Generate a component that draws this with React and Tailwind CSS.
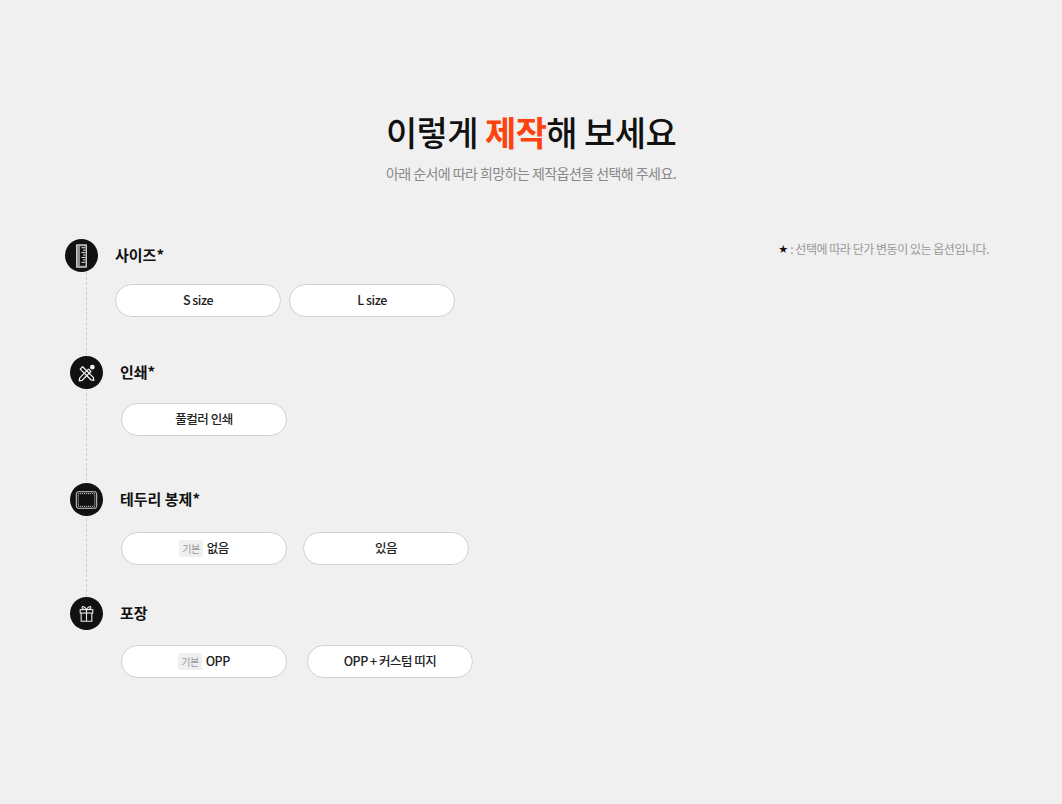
const font = { fontFamily: '"Noto Sans CJK KR", "Noto Sans", sans-serif' };

function RulerIcon() {
  return (
    <svg width="34" height="34" viewBox="0 0 34 34" fill="none">
      <rect x="12" y="5.500" width="10" height="23" fill="#8f8f8f" stroke="#e4e4e4" strokeWidth="1" />
      <rect x="15.500" y="7" width="5.500" height="20" fill="#111" />
      <path d="M17 8.500h4M18.500 11h2.500M17 13.500h4M18.500 16h2.500M17 18.500h4M18.500 21h2.500M17 23.500h4" stroke="#eee" strokeWidth="1" />
    </svg>
  );
}

function ToolsIcon() {
  return (
    <svg width="34" height="34" viewBox="0 0 34 34" fill="none" stroke="#f2f2f2" strokeWidth="1.300" strokeLinejoin="round">
      <path d="M10.500 13l2.500-2.500 11 11 .5 3-3-.5z" />
      <path d="M10 22l9-9 2.500 2.500-9 9-3 .5z" />
      <circle cx="23" cy="11" r="1.800" fill="#f2f2f2" />
    </svg>
  );
}

function StitchIcon() {
  return (
    <svg width="34" height="34" viewBox="0 0 34 34" fill="none">
      <rect x="6.500" y="8.500" width="21" height="17" rx="2" stroke="#d8d8d8" strokeWidth="1" />
      <rect x="8.500" y="10.500" width="17" height="13" stroke="#eee" strokeWidth="1" strokeDasharray="1 1" />
    </svg>
  );
}

function GiftIcon() {
  return (
    <svg width="34" height="34" viewBox="0 0 34 34" fill="none" stroke="#eee" strokeWidth="1.100">
      <rect x="10.500" y="12.500" width="13" height="3.500" />
      <path d="M11.500 16v8.500h11V16M17 12.500v12" />
      <path d="M17 12.500c-1-2.500-4-4-4.500-2.500s1.500 2.500 4.500 2.500c3 0 5-1 4.500-2.500s-3.500 0-4.500 2.500z" />
    </svg>
  );
}

function Step({ icon, title, className, children }) {
  return (
    <section className={className}>
      <div className="flex items-center gap-[17px]">
        <div className="relative z-10 flex h-[33px] w-[33px] shrink-0 items-center justify-center rounded-full bg-[#111111]">
          {icon}
        </div>
        <h3 className="pb-[2px] text-[15px] font-bold leading-[31px] text-[#111111]">{title}</h3>
      </div>
      {children}
    </section>
  );
}

function Option({ base, children }) {
  return (
    <button className="flex h-[33px] w-[166px] shrink-0 items-center justify-center gap-[4px] rounded-full border border-[#d0d0d0] bg-white pb-[1px] text-[12.5px] font-medium tracking-[-0.5px] text-[#222222]">
      {base && (
        <span className="mt-[1px] rounded-[2px] bg-[#f0f0f0] px-[3px] text-[10px] font-normal leading-[17px] text-[#999999]">
          기본
        </span>
      )}
      {children}
    </button>
  );
}

export default function App() {
  return (
    <div className="relative h-[804px] overflow-hidden bg-[#f0f0f0]" style={font}>
      {/* heading */}
      <div className="pt-[108px] text-center">
        <h1 className="text-[34px] font-medium leading-[48px] tracking-[-0.6px] text-[#111111]">
          이렇게 <span className="font-bold text-[#fc4310]">제작</span>해 보세요
        </h1>
        <p className="mt-[6px] text-[14px] leading-[22px] tracking-[-0.55px] text-[#888888]">
          아래 순서에 따라 희망하는 제작옵션을 선택해 주세요.
        </p>
      </div>

      <div className="relative mt-[55px]">
        <p className="absolute right-[73px] top-[0px] flex items-center text-[12px] leading-[20px] tracking-[-0.47px] text-[#999999]">
          <span className="mr-[3px] text-[9px] text-[#111111]">★</span>: 선택에 따라 단가 변동이 있는 옵션입니다.
        </p>

        {/* dashed line joining the steps */}
        <div className="absolute left-[86px] top-[33px] h-[325px] border-l border-dashed border-[#cccccc]" />

        <Step icon={<RulerIcon />} title="사이즈*" className="ml-[65px]">
          <div className="ml-[50px] mt-[12px] flex gap-[8px]">
            <Option>S size</Option>
            <Option>L size</Option>
          </div>
        </Step>

        <Step icon={<ToolsIcon />} title="인쇄*" className="ml-[70px] mt-[39px]">
          <div className="ml-[51px] mt-[14px] flex">
            <Option>풀컬러 인쇄</Option>
          </div>
        </Step>

        <Step icon={<StitchIcon />} title="테두리 봉제*" className="ml-[70px] mt-[47px]">
          <div className="ml-[51px] mt-[16px] flex gap-[16px]">
            <Option base>없음</Option>
            <Option>있음</Option>
          </div>
        </Step>

        <Step icon={<GiftIcon />} title="포장" className="ml-[70px] mt-[32px]">
          <div className="ml-[51px] mt-[15px] flex gap-[20px]">
            <Option base>OPP</Option>
            <Option>OPP + 커스텀 띠지</Option>
          </div>
        </Step>
      </div>
    </div>
  );
}
